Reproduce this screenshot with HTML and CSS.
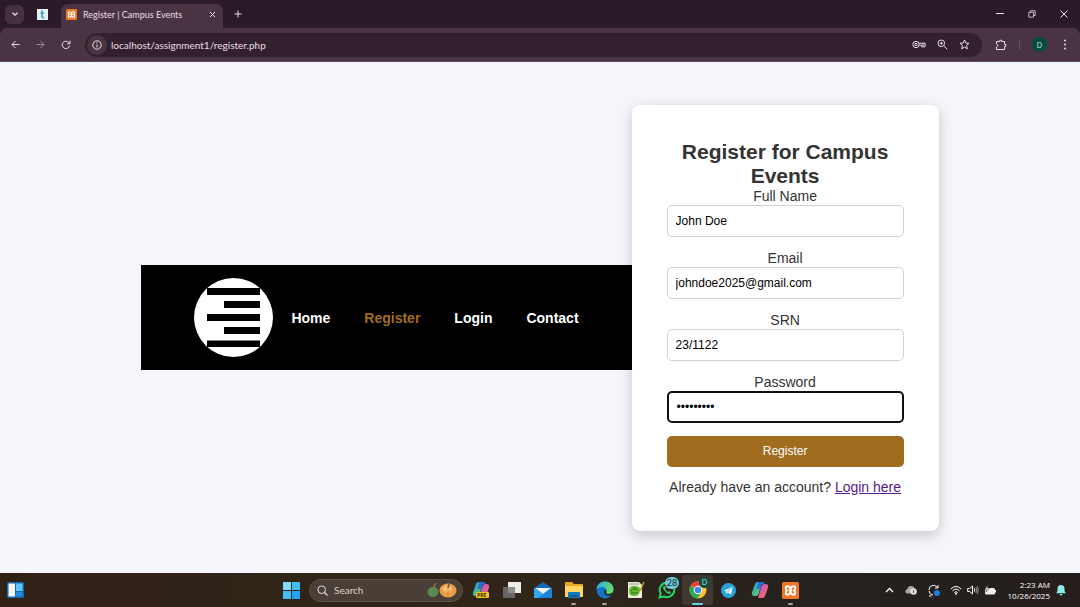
FILE: index.html
```html
<!DOCTYPE html>
<html lang="en">
<head>
<meta charset="utf-8">
<title>Register | Campus Events</title>
<link rel="stylesheet" href="styles.css">
</head>
<body>
<header class="browser">
  <div class="tabstrip">
    <button class="tab-search" aria-label="Search tabs"><svg width="8" height="8" viewBox="0 0 8 8"><path d="M1.500 2.700 4 5.200l2.500-2.500" class="line bold"/></svg></button>
    <button class="pinned" aria-label="Pinned tab"><svg width="11" height="11" viewBox="0 0 11 11"><rect width="11" height="11" fill="#e9f1f5"/><path d="M5 1.500v6q0 1.500 2.300 1M3.500 4H7" fill="none" stroke="#3b9fd0" stroke-width="1.600"/></svg></button>
    <div class="tab">
      <svg width="11" height="11" viewBox="0 0 16 16"><use href="#xampp"/></svg>
      <span class="tab-title">Register | Campus Events</span>
      <button class="plain" aria-label="Close tab"><svg width="7" height="7" viewBox="0 0 7 7"><path d="m1 1 5 5m0-5L1 6" class="line"/></svg></button>
    </div>
    <button class="plain new-tab" aria-label="New tab"><svg width="8" height="8" viewBox="0 0 8 8"><path d="M4 .5v7M.5 4h7" class="line"/></svg></button>
    <div class="window-controls">
      <button class="plain" aria-label="Minimize"><svg width="8" height="8" viewBox="0 0 8 8"><path d="M0 3.500h8" class="line"/></svg></button>
      <button class="plain" aria-label="Restore"><svg width="8" height="8" viewBox="0 0 8 8"><path d="M.8 2.300h4.700V7.200H.8zM2.300 2.300V.8h4.900v4.700H5.500" class="line thin"/></svg></button>
      <button class="plain" aria-label="Close"><svg width="8" height="8" viewBox="0 0 8 8"><path d="m.5.5 7 7m0-7-7 7" class="line"/></svg></button>
    </div>
  </div>
  <div class="toolbar">
    <button class="plain" aria-label="Back"><svg width="9" height="9" viewBox="0 0 9 9"><path d="M8.500 4.500H1M4.500 1 1 4.500 4.500 8" class="line"/></svg></button>
    <button class="plain dim" aria-label="Forward"><svg width="9" height="9" viewBox="0 0 9 9"><path d="M.5 4.500H8M4.500 1 8 4.500 4.500 8" class="line"/></svg></button>
    <button class="plain" aria-label="Reload"><svg width="10" height="10" viewBox="0 0 10 10"><path d="M8.600 5.500A3.700 3.700 0 1 1 7.600 2.300L9 3.600M9 .7v3H6" class="line"/></svg></button>
    <div class="address">
      <button class="site-info" aria-label="Site information"><svg width="10" height="10" viewBox="0 0 10 10"><circle cx="5" cy="5" r="4.200" class="line"/><path d="M5 4.500v3M5 2.400v1.100" class="line"/></svg></button>
      <input class="url" type="text" aria-label="Address" value="localhost/assignment1/register.php">
      <button class="plain" aria-label="Passwords"><svg width="14" height="9" viewBox="0 0 14 9"><circle cx="4" cy="4.500" r="3.200" class="line"/><circle cx="4" cy="4.500" r="1.200" class="line"/><path d="M7.200 3.200h5.900v3.600H9.500V5.200H7.200M11 3.200v3" class="line"/></svg></button>
      <button class="plain" aria-label="Zoom"><svg width="11" height="11" viewBox="0 0 11 11"><circle cx="4.300" cy="4.300" r="3.300" class="line"/><path d="m6.800 6.800 3.500 3.500M4.300 2.800v3M2.800 4.300h3" class="line"/></svg></button>
      <button class="plain" aria-label="Bookmark"><svg width="11" height="11" viewBox="0 0 11 11"><path d="m5.500 1 1.300 3 3.200.3-2.400 2.200.7 3.300-2.800-1.700-2.800 1.700.7-3.300L1 4.300 4.200 4z" class="line"/></svg></button>
    </div>
    <button class="plain extensions" aria-label="Extensions"><svg width="12" height="12" viewBox="0 0 12 12"><path d="M1.500 2.500h3.200V1.300h1.900v1.200h3v3h1.200v1.900H9.600v3.100H1.500V8.200q1.200-.3 1.200-1.700T1.500 4.800z" class="line"/></svg></button>
    <span class="divider"></span>
    <button class="avatar">D</button>
    <button class="plain more" aria-label="Menu"><svg width="4" height="11" viewBox="0 0 4 11"><g fill="#eadde6"><circle cx="2" cy="1.500" r="1"/><circle cx="2" cy="5.500" r="1"/><circle cx="2" cy="9.500" r="1"/></g></svg></button>
  </div>
</header>

<main class="page">
  <nav class="site-nav">
    <svg class="logo" width="79" height="79" viewBox="0 0 79 79"><circle cx="39.500" cy="39.500" r="39.500" fill="#fff"/><path d="M13 10h53v7H13zM30 23h36v7H30zM13 36h53v7H13zM30 49h36v7H30zM13 62.500h53v6.500H13z" fill="#000"/></svg>
    <ul class="links">
      <li><a href="#">Home</a></li>
      <li><a href="#" class="active">Register</a></li>
      <li><a href="#">Login</a></li>
      <li><a href="#">Contact</a></li>
    </ul>
  </nav>
  <form class="card">
    <h1>Register for Campus Events</h1>
    <label for="name">Full Name</label>
    <input class="field" id="name" type="text" value="John Doe">
    <label for="email">Email</label>
    <input class="field" id="email" type="email" value="johndoe2025@gmail.com">
    <label for="srn">SRN</label>
    <input class="field" id="srn" type="text" value="23/1122">
    <label for="password">Password</label>
    <input class="field focused" id="password" type="password" value="campus123">
    <button class="submit" type="submit">Register</button>
    <p class="login-note">Already have an account? <a href="#">Login here</a></p>
  </form>
</main>

<footer class="taskbar">
  <button class="plain widgets" aria-label="Widgets"><svg width="17" height="16" viewBox="0 0 17 16"><rect width="17" height="16" rx="1.500" fill="#1568b0"/><path d="M1.500 1.500H8v13H1.500z" fill="#f3f5f8"/><path d="M9 1.500h6.500V9H9z" fill="#5dc8f8"/><path d="M9 10h6.500v4.500H9z" fill="#2188e0"/></svg></button>
  <div class="apps">
    <button class="start" aria-label="Start"><svg width="17" height="17" viewBox="0 0 17 17"><path d="M0 0h8v8H0z" fill="#7bdcff"/><path d="M9 0h8v8H9zM0 9h8v8H0z" fill="#43bdf5"/><path d="M9 9h8v8H9z" fill="#22a5ee"/></svg></button>
    <div class="search">
      <svg width="11" height="11" viewBox="0 0 11 11"><circle cx="4.700" cy="4.700" r="3.800" class="line"/><path d="m7.500 7.500 3 3" class="line bold"/></svg>
      <input type="text" aria-label="Search" placeholder="Search">
      <svg width="30" height="16" viewBox="0 0 30 16"><ellipse cx="6" cy="10" rx="5.500" ry="5" fill="#5b8e56"/><path d="M6 5v10M3 6q-2 4 0 8M9 6q2 4 0 8" stroke="#477c4c" stroke-width=".7" fill="none"/><path d="M6 6 9 1" stroke="#8e7445" stroke-width="1.500"/><ellipse cx="21" cy="8.500" rx="8.500" ry="7" fill="#efa14a"/><ellipse cx="20" cy="6.500" rx="5" ry="3" fill="#fbc67c"/><path d="M17 4q-5 5 0 10M25 4q5 5 0 10M21 6v9" stroke="#d67f2c" stroke-width=".7" fill="none"/><path d="m21 6 1-4" stroke="#6d5535" stroke-width="1.500"/></svg>
    </div>
    <button class="app" aria-label="Copilot preview"><svg width="18" height="18" viewBox="0 0 18 18"><use href="#copilot"/><rect x="4" y="11" width="13" height="6" rx="1" fill="#f4c425"/><text x="5" y="16" class="pre">PRE</text></svg></button>
    <button class="app" aria-label="Task view"><svg width="18" height="18" viewBox="0 0 18 18"><path d="M5 1h13v11H5z" fill="#ececec"/><path d="M0 6h12v11H0z" fill="#777" fill-opacity=".8"/></svg></button>
    <button class="app" aria-label="Mail"><svg width="18" height="18" viewBox="0 0 18 18"><path d="m0 7 9-6 9 6v10H0z" fill="#1269b6"/><path d="M1 7h16l-8 6z" fill="#e9f7ff"/><path d="m0 7 10 7-4 3H0z" fill="#32a9ed"/><path d="M18 7 4 17h14z" fill="#1786dc"/></svg></button>
    <button class="app open" aria-label="File Explorer"><svg width="18" height="18" viewBox="0 0 18 18"><path d="M0 2q0-1 1-1h6l2 2h8q1 0 1 1v12H0z" fill="#eba923"/><path d="M0 5h18v11H0z" fill="#ffd568"/><path d="M3 12q0-1 1-1h10q1 0 1 1v5H3z" fill="#137abd"/><path d="M5 14h8v2H5z" fill="#155d91"/></svg></button>
    <button class="app open" aria-label="Edge"><svg width="18" height="18" viewBox="0 0 18 18"><defs><linearGradient id="edge" x2="1" y2=".4"><stop stop-color="#27a7ee"/><stop offset="1" stop-color="#65dc68"/></linearGradient></defs><circle cx="9" cy="9" r="8.500" fill="#1274c8"/><path d="M.5 8C1 3 5 .5 9 .5c5 0 8.500 3.500 8.500 7.500 0 3-2 5-5 5-3.500 0-2-1.500-2-3.500S9 6 6.500 6 1.500 7 .5 8z" fill="url(#edge)"/><path d="M10.500 9.500q-1.500 3.500 2 3.500 3 0 4.300-2 .2 2-1.300 3.500-3 .8-5.500-.5T8 10q.5-1.500 2.500-.5z" fill="#302519"/></svg></button>
    <button class="app" aria-label="Notepad++"><svg width="18" height="18" viewBox="0 0 18 18"><path d="M1 1h11l3 3v13H1z" fill="#eceddf"/><path d="M2 3h10" stroke="#88966e"/><path d="M2 10q0-5 5-5 7 0 6 5-1 5-6 5-5 0-5-5z" fill="#64b72d"/><path d="M4 10q3-4 7-1M4 12h7M6 7h2" stroke="#26731d" fill="none"/><path d="m13 10 4-9" stroke="#c49b28" stroke-width="1.500"/></svg></button>
    <button class="app" aria-label="WhatsApp"><svg width="18" height="18" viewBox="0 0 18 18"><path d="m1.500 16.500 1.200-4A7.300 7.300 0 1 1 6 15.500z" fill="none" stroke="#29d467" stroke-width="2"/><path d="M6 5q-2 1 0 4t5 4q2 0 2-2l-2-1-1 1Q8 10 7 8l1-1-1-2z" fill="#29d467"/></svg><span class="badge">28</span></button>
    <button class="app current" aria-label="Chrome"><svg width="18" height="18" viewBox="0 0 18 18"><circle cx="9" cy="9" r="8.500" fill="#fbc62d"/><path d="M9 9 1.600 4.800A8.500 8.500 0 0 1 16.400 5H9z" fill="#e94537"/><path d="M9 9 1.600 4.800A8.500 8.500 0 0 0 8.500 17.500L12.500 11z" fill="#31a853"/><circle cx="9" cy="9" r="4.300" fill="#fff"/><circle cx="9" cy="9" r="3.300" fill="#4285e8"/></svg><span class="badge profile">D</span></button>
    <button class="app" aria-label="Telegram"><svg width="15" height="15" viewBox="0 0 15 15"><circle cx="7.500" cy="7.500" r="7.500" fill="#29a3dc"/><path d="m3 7.500 8.500-3.500-1.500 7.500-3-2-1.500 1.500-.5-2.500z" fill="#fff"/><path d="m5 8.500 5-3-3.500 4" stroke="#8bc7e4" fill="none"/></svg></button>
    <button class="app" aria-label="Copilot"><svg width="18" height="18" viewBox="0 0 18 18"><use href="#copilot"/></svg></button>
    <button class="app open" aria-label="XAMPP"><svg width="17" height="17" viewBox="0 0 16 16"><use href="#xampp"/></svg></button>
  </div>
  <div class="tray">
    <svg class="chevron" width="9" height="9" viewBox="0 0 9 9"><path d="m1 6 3.500-3.500L8 6" class="line bold"/></svg>
    <svg class="cloud" width="12" height="10" viewBox="0 0 12 10"><path d="M2.500 8.500Q0 8 .5 5.500 1 4 2.500 4 3 1 6 1t3.500 3l-5 4.500z" fill="#aaa9a8"/><circle cx="8.500" cy="6.500" r="3.300" fill="#e2e1df"/><path d="M8.500 5v3" stroke="#555"/></svg>
    <svg class="sync" width="14" height="13" viewBox="0 0 14 13"><path d="M2 6a4.500 4.500 0 0 1 8-3l1 1M11 1v3H8M2 7a4.500 4.500 0 0 0 4 4M2 12h2.500" class="line"/><circle cx="10" cy="9" r="3" fill="#1780db"/></svg>
    <svg class="wifi" width="12" height="10" viewBox="0 0 12 10"><path d="M.8 4Q6-1 11.200 4M2.500 5.800Q6 2.400 9.500 5.800M4.200 7.500q1.800-1.600 3.600 0" class="line"/><circle cx="6" cy="8.800" r="1" fill="#fff"/></svg>
    <svg class="sound" width="12" height="10" viewBox="0 0 12 10"><path d="M.7 3.500h2L5.500 1v8L2.700 6.500h-2zM7.200 3.300q1.200 1.700 0 3.400" class="line"/><path d="M8.800 2q2 3 0 6M10.300 1q2 4 0 8" class="line dim"/></svg>
    <svg class="battery" width="13" height="10" viewBox="0 0 13 10"><rect x="1" y="3" width="10" height="6.500" rx="1.500" fill="#f1efed"/><path d="M11.500 5v2.500" class="line"/><path d="m4 0-3 4h2L2 7l3.500-4h-2z" fill="#fff" stroke="#2a211d" stroke-width=".5"/></svg>
    <div class="clock"><span>2:23 AM</span><span>10/26/2025</span></div>
    <svg class="bell" width="10" height="12" viewBox="0 0 10 12"><path d="M.5 8.500 1.500 7V4.500a3.500 3.500 0 0 1 7 0V7l1 1.500v.8h-9zM3.500 10h3Q6 11.500 5 11.500T3.500 10z" fill="#8fe9e4"/></svg>
  </div>
</footer>

<svg class="sprite" aria-hidden="true">
  <defs>
    <linearGradient id="cool" y2="1"><stop stop-color="#249ee4"/><stop offset=".6" stop-color="#49bd82"/><stop offset="1" stop-color="#f4cb39"/></linearGradient>
    <linearGradient id="warm" y2="1"><stop stop-color="#8b61ec"/><stop offset=".5" stop-color="#df5a9c"/><stop offset="1" stop-color="#f48144"/></linearGradient>
    <symbol id="xampp" viewBox="0 0 16 16"><rect width="16" height="16" rx="1.500" fill="#ed7624"/><path d="M3.500 5.800Q3.500 4 5.300 4 7.300 4 8 6.500 8.700 4 10.700 4q1.800 0 1.800 1.800 0 1.400-1.200 2.200 1.200.8 1.200 2.200 0 1.800-1.800 1.800-2 0-2.700-2.500Q7.300 12 5.300 12q-1.800 0-1.800-1.800 0-1.400 1.200-2.200-1.200-.8-1.200-2.200zM6.300 8h3.400" fill="none" stroke="#fff" stroke-width="1.800" stroke-linejoin="round"/></symbol>
    <symbol id="copilot" viewBox="0 0 18 18"><path d="M4 3q.7-2 2.500-2H11L7.700 12.500Q7 15 5 15H3.500Q0 15 1 11.500z" fill="url(#cool)"/><path d="M14 15q-.7 2-2.500 2H7l3.300-11.500Q11 3 13 3h1.500Q18 3 17 6.500z" fill="url(#warm)"/><path d="M7 1h4.500q1.500 0 2 2H12q-1.700 0-2.200 2L9 8H5.500z" fill="#2870d8"/></symbol>
  </defs>
</svg>
</body>
</html>
```

FILE: styles.css
```css
* { box-sizing: border-box; }
body {
  margin: 0;
  min-height: 100vh;
  display: flex;
  flex-direction: column;
  background: #f4f6fb;
  font-family: "Liberation Sans", Arial, sans-serif;
  font-size: 14px;
  color: #333;
}
button, input { font-family: inherit; }
button { border: 0; padding: 0; background: none; color: inherit; }
svg { display: block; flex: none; }
.sprite { position: absolute; width: 0; height: 0; }
.line { fill: none; stroke: #eadde6; stroke-width: 1; }
.line.bold { stroke-width: 1.3; }
.line.thin { stroke-width: .8; }
.dim { opacity: .5; }
.plain { display: flex; align-items: center; justify-content: center; }

/* Browser frame */
.browser { background: #2b1a29; color: #eadde6; font-family: Lato, "Open Sans", sans-serif; }
.tabstrip { display: flex; align-items: center; height: 28px; padding-left: 5px; }
.tab-search { width: 19px; height: 19px; border-radius: 6px; background: #46313f; display: grid; place-items: center; }
.pinned { margin: 0 13px; }
.tab {
  align-self: flex-end;
  display: flex;
  align-items: center;
  gap: 6px;
  width: 162px;
  height: 24px;
  padding: 0 7px 3px 5px;
  border-radius: 7px 7px 0 0;
  background: #4a3444;
}
.tab-title { flex: 1; font-size: 9px; line-height: 12px; white-space: nowrap; }
.new-tab { margin-left: 11px; }
.window-controls { display: flex; gap: 24px; margin-left: auto; padding-right: 12px; }
.toolbar { display: flex; align-items: center; gap: 16px; height: 34px; padding: 0 13px 0 11px; background: #4a3444; border-radius: 7px 7px 0 0; border-bottom: 1px solid #5d4a58; }
.address { flex: 1; display: flex; align-items: center; gap: 11px; height: 24px; margin-left: -2px; padding: 0 12px 0 2px; border-radius: 12px; background: #33202f; }
.site-info { display: grid; place-items: center; width: 20px; height: 20px; border-radius: 50%; background: #49343f; }
.url { flex: 1; min-width: 0; margin-left: -7px; padding: 0; border: 0; outline: 0; background: none; color: #eadde6; font-size: 10px; }
.extensions { margin-left: -3px; }
.divider { width: 1px; height: 11px; margin: 0 -4px; background: #67515f; }
.avatar { width: 15px; height: 15px; border-radius: 50%; background: #004d40; color: #d5e4df; font-size: 7px; }

/* Page */
.page { flex: 1; display: flex; align-items: center; justify-content: center; }
.site-nav { display: flex; align-items: center; gap: 18px; padding: 13px 53px; background: #000; }
.links { display: flex; gap: 34px; margin: 0; padding: 0; list-style: none; }
.links a { color: #fff; font-weight: bold; text-decoration: none; }
.links .active { color: #a06d1f; }
.card {
  width: 307px;
  padding: 35px;
  border-radius: 8px;
  background: #fff;
  box-shadow: 0 4px 14px rgba(0, 0, 0, .2);
  text-align: center;
  line-height: 17px;
}
.card h1 { margin: 0; font-size: 21px; line-height: 24px; }
.card label { display: block; }
.field {
  display: block;
  width: 100%;
  height: 32px;
  margin-bottom: 13px;
  padding: 0 8px;
  border: 1px solid #d2d2d2;
  border-radius: 5px;
  background: #fff;
  color: #000;
  font-size: 12px;
}
.focused { border: 2px solid #101010; outline: 0; }
.submit { width: 100%; height: 31px; border-radius: 5px; background: #a06d1f; color: #fff; font-size: 12px; }
.login-note { margin: 12px -2px 0; }
.login-note a { color: #551a8b; }

/* Taskbar */
.taskbar {
  display: grid;
  grid-template-columns: 1fr auto 1fr;
  align-items: center;
  height: 34px;
  background: linear-gradient(90deg, #302117, #302519 50%, #26211e 75%, #251e1c);
  color: #fff;
  font-family: Lato, "Open Sans", sans-serif;
}
.widgets { justify-self: start; margin-left: 7px; }
.apps { display: flex; align-items: center; padding-left: 5px; }
.start { display: grid; place-items: center; width: 24px; height: 28px; margin-right: 6px; }
.search { display: flex; align-items: center; gap: 6px; width: 154px; height: 23px; margin-right: 2px; padding: 0 5px 0 7px; border: 1px solid #5c5145; border-radius: 12px; background: #493f36; }
.search input { flex: 1; min-width: 0; padding: 0; border: 0; outline: 0; background: none; color: #fff; font-size: 10px; }
.search input::placeholder { color: #d9d4ce; }
.app { position: relative; display: grid; place-items: center; width: 31px; height: 30px; }
.app.open::after, .app.current::after { content: ""; position: absolute; bottom: 0; left: 13px; width: 5px; height: 2px; border-radius: 1px; background: #aaa39b; }
.app.current { border-radius: 4px; background: #40382f; }
.app.current::after { left: 10px; width: 11px; background: #6bd3dc; }
.badge { position: absolute; top: 2px; right: 3px; min-width: 14px; height: 12px; border-radius: 6px; background: #70c9d6; color: #12262a; font-size: 9px; line-height: 12px; }
.badge.profile { min-width: 11px; height: 11px; background: #0b4f43; color: #c3dad4; font-size: 7px; line-height: 11px; }
.pre { fill: #332710; font: bold 5px "Open Sans", sans-serif; }
.tray { justify-self: end; display: flex; align-items: center; padding-right: 14px; }
.tray .line { stroke: #fff; }
.chevron { margin-right: 11px; }
.cloud { margin-right: 10px; }
.sync { margin-right: 9px; }
.wifi, .sound { margin-right: 5px; }
.battery { margin-right: 11px; }
.clock { display: flex; flex-direction: column; align-items: flex-end; margin-right: 6px; font-family: "Open Sans", "Noto Sans", sans-serif; font-size: 8px; line-height: 11px; }
```
